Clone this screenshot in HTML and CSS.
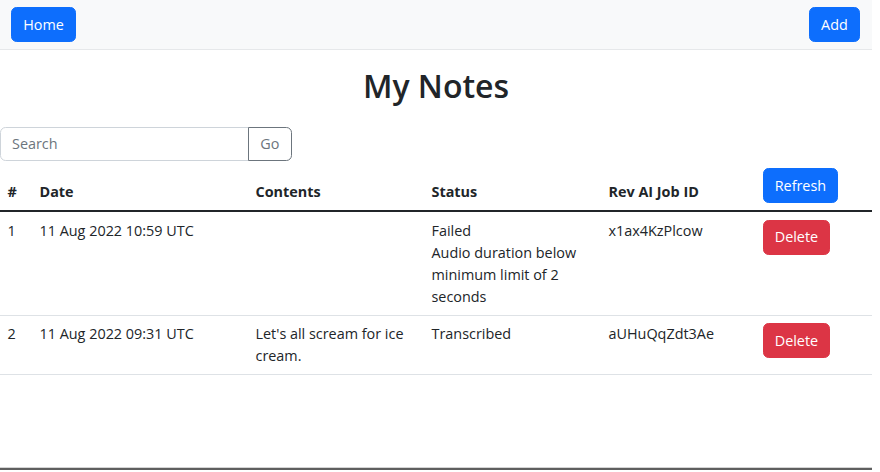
FILE: index.html
```html
<!DOCTYPE html>
<html lang="en">
<head>
<meta charset="utf-8">
<title>My Notes</title>
<link rel="stylesheet" href="styles.css">
</head>
<body>
<div class="app">
  <nav class="navbar">
    <button class="btn btn-primary">Home</button>
    <button class="btn btn-primary">Add</button>
  </nav>
  <main class="main">
    <h1 class="title">My Notes</h1>
    <div class="input-group">
      <input class="search" type="text" placeholder="Search">
      <button class="btn btn-outline">Go</button>
    </div>
    <table class="notes">
      <colgroup>
        <col class="c-num"><col class="c-date"><col class="c-contents"><col class="c-status"><col class="c-job"><col class="c-action">
      </colgroup>
      <thead>
        <tr>
          <th>#</th>
          <th>Date</th>
          <th>Contents</th>
          <th>Status</th>
          <th>Rev AI Job ID</th>
          <th><button class="btn btn-primary">Refresh</button></th>
        </tr>
      </thead>
      <tbody>
        <tr>
          <td>1</td>
          <td>11 Aug 2022 10:59 UTC</td>
          <td></td>
          <td>Failed<br>Audio duration below minimum limit of 2 seconds</td>
          <td>x1ax4KzPlcow</td>
          <td><button class="btn btn-danger">Delete</button></td>
        </tr>
        <tr>
          <td>2</td>
          <td>11 Aug 2022 09:31 UTC</td>
          <td>Let's all scream for ice cream.</td>
          <td>Transcribed</td>
          <td>aUHuQqZdt3Ae</td>
          <td><button class="btn btn-danger">Delete</button></td>
        </tr>
      </tbody>
    </table>
  </main>
  <footer class="footer"></footer>
</div>
</body>
</html>
```
FILE: styles.css
```css
* { box-sizing: border-box; }
html, body { margin: 0; padding: 0; background: #fff; }
body {
  font-family: "Open Sans", "Noto Sans", sans-serif;
  font-size: 14.4px;
  line-height: 22px;
  color: #212529;
}
.app {
  width: 872px;
  min-height: 472px;
  display: flex;
  flex-direction: column;
}
.navbar {
  display: flex;
  justify-content: space-between;
  align-items: center;
  padding: 7px 12px 7px 11px;
  background: #f8f9fa;
  border-bottom: 1px solid #e6e8ea;
}
.btn {
  font-family: inherit;
  font-size: 14.4px;
  line-height: 22px;
  padding: 5.5px 11.2px;
  border: 1px solid transparent;
  border-radius: 5.6px;
  cursor: pointer;
}
.btn-primary { background: #0d6efd; border-color: #0d6efd; color: #fff; }
.btn-danger { background: #dc3545; border-color: #dc3545; color: #fff; }
.btn-outline {
  background: #fff;
  border-color: #6c757d;
  color: #6c757d;
  border-top-left-radius: 0;
  border-bottom-left-radius: 0;
  margin-left: -1px;
  padding: 5px 11.2px;
}
.main { flex: 1; }
.title {
  margin: 16px 0 21px;
  text-align: center;
  font-size: 32px;
  line-height: 39.6px;
  font-weight: 600;
}
.input-group { display: flex; }
.search {
  width: 249px;
  height: 34px;
  font-family: inherit;
  font-size: 14.4px;
  padding: 5px 11px;
  border: 1px solid #ced4da;
  border-radius: 5.6px 0 0 5.6px;
  color: #212529;
  outline: none;
}
.search::placeholder { color: #6c757d; }
.notes {
  width: 872px;
  table-layout: fixed;
  border-collapse: collapse;
}
.c-num { width: 32px; }
.c-date { width: 216px; }
.c-contents { width: 176px; }
.c-status { width: 177px; }
.c-job { width: 154px; }
.c-action { width: 117px; }
.notes th, .notes td {
  text-align: left;
  padding: 7.5px 7.5px 7px;
}
.notes th {
  font-weight: 700;
  vertical-align: bottom;
  border-bottom: 2px solid #212529;
}
.notes td {
  vertical-align: top;
  border-bottom: 1px solid #dee2e6;
}
.footer {
  height: 3px;
  margin-bottom: 2px;
  border-top: 1px solid #d4d4d4;
  background: #5f5f5f;
}
```
